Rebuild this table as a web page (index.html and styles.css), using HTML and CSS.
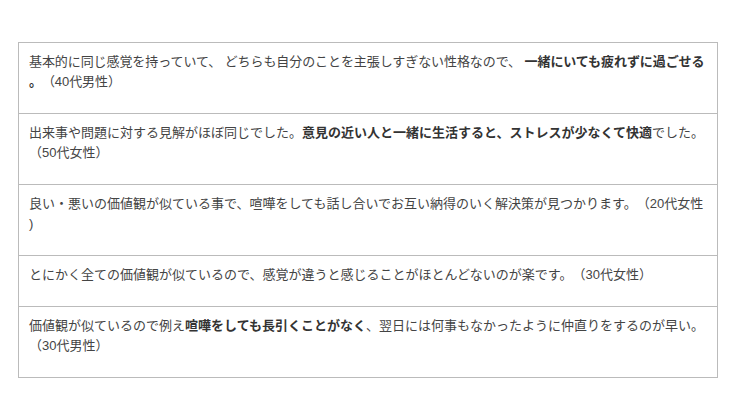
FILE: index.html
```html
<!DOCTYPE html>
<html lang="ja">
<head>
    <meta charset="UTF-8">
    <meta name="viewport" content="width=device-width, initial-scale=1.0">
    <title>口コミ</title>
    <link rel="stylesheet" href="styles.css">
</head>
<body>
    <div class="page">
        <table class="voices">
            <tr>
                <td class="tight">基本的に同じ感覚を持っていて、 どちらも自分のことを主張しすぎない性格なので、 <strong>一緒にいても疲れずに過ごせる<br>。</strong>（40代男性）</td>
            </tr>
            <tr>
                <td>出来事や問題に対する見解がほぼ同じでした。<strong>意見の近い人と一緒に生活すると、ストレスが少なくて快適</strong>でした。<br>（50代女性）</td>
            </tr>
            <tr>
                <td>良い・悪いの価値観が似ている事で、喧嘩をしても話し合いでお互い納得のいく解決策が見つかります。（20代女性<br>)</td>
            </tr>
            <tr>
                <td>とにかく全ての価値観が似ているので、感覚が違うと感じることがほとんどないのが楽です。（30代女性）</td>
            </tr>
            <tr>
                <td>価値観が似ているので例え<strong>喧嘩をしても長引くことがなく</strong>、翌日には何事もなかったように仲直りをするのが早い。<br>（30代男性）</td>
            </tr>
        </table>
    </div>
</body>
</html>
```

FILE: styles.css
```css
body {
    margin: 0;
    background: #fff;
    font-family: "Liberation Sans", "Noto Sans CJK JP", sans-serif;
    font-size: 13px;
    color: #444;
}
.page {
    padding: 42px 0 0 18px;
}
.voices {
    width: 700px;
    table-layout: fixed;
    border-collapse: collapse;
}
.voices td {
    border: 1px solid #bbb;
    padding: 9px 10px 21px;
    line-height: 20px;
    white-space: nowrap;
    overflow: hidden;
    vertical-align: top;
    text-spacing-trim: space-all;
}
.voices td.tight {
    letter-spacing: -0.08px;
}
.voices strong {
    color: #333;
    font-weight: bold;
}
```
